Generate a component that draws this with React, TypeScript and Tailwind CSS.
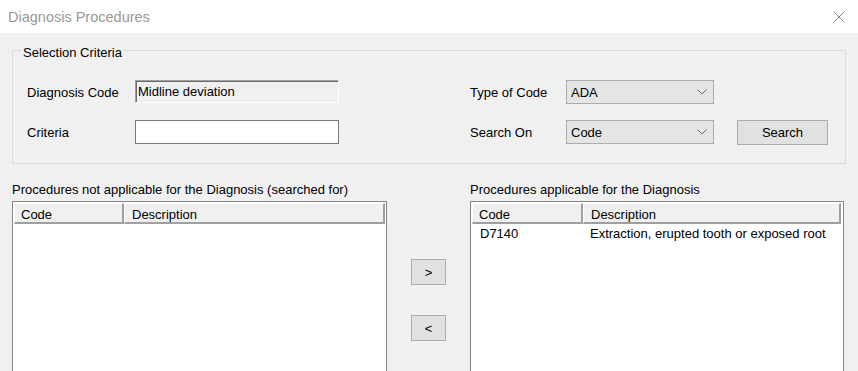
import React from 'react';

const font = { fontFamily: '"Liberation Sans", Arial, sans-serif' };

function Chevron() {
  return (
    <svg width="10" height="6" viewBox="0 0 10 6" className="shrink-0">
      <polyline points="0.5,0.5 5,5 9.5,0.5" fill="none" stroke="#6b6b6b" strokeWidth="1" />
    </svg>
  );
}

function Combo({ value }: { value: string }) {
  return (
    <div className="flex h-[24px] w-[148px] items-center justify-between border border-[#acacac] bg-[#e5e5e5] pl-[4px] pr-[6px]">
      <span>{value}</span>
      <Chevron />
    </div>
  );
}

function Header({ codeW, descW }: { codeW: string; descW: string }) {
  return (
    <div className="flex h-[21px]">
      <div className={`${codeW} flex items-center border-t border-l border-white border-r-2 border-b-2 border-r-[#a0a0a0] border-b-[#a0a0a0] bg-[#f0f0f0] pt-[2px] pl-[6px]`}>
        Code
      </div>
      <div className={`${descW} flex items-center border-t border-l border-white border-r-2 border-b-2 border-r-[#a0a0a0] border-b-[#a0a0a0] bg-[#f0f0f0] pt-[2px] pl-[7px]`}>
        Description
      </div>
    </div>
  );
}

export default function App() {
  return (
    <div style={font} className="flex h-[371px] w-[858px] flex-col overflow-hidden text-[13px] leading-[15px] text-black">
      {/* title bar */}
      <div className="flex h-[33px] shrink-0 items-center justify-between bg-white pl-[8px] pr-[13px]">
        <span className="text-[14.5px] leading-[18px] text-[#999999]">Diagnosis Procedures</span>
        <svg width="12" height="12" viewBox="0 0 12 12">
          <path d="M0.5 0.5 L11.5 11.5 M11.5 0.5 L0.5 11.5" stroke="#8a8a8a" strokeWidth="1" fill="none" />
        </svg>
      </div>

      <div className="flex-1 bg-[#f0f0f0]">
        <fieldset className="mx-[12px] mt-[7px] border border-[#dcdcdc] p-0">
          <legend className="ml-[8px] px-[2px] pt-[5px] leading-[15px]">Selection Criteria</legend>
          <div className="flex flex-col gap-[16px] pt-[20px] pb-[19px] pl-[14px]">
            <div className="flex h-[24px] items-center">
              <span className="w-[108px]">Diagnosis Code</span>
              <div className="h-[23px] w-[204px] self-start border border-[#a0a0a0] border-r-white border-b-white bg-[#f0f0f0] pt-[3px] pl-[2px] shadow-[inset_1px_1px_0_#6d6d6d]">
                Midline deviation
              </div>
              <div className="w-[131px]" />
              <span className="w-[96px]">Type of Code</span>
              <Combo value="ADA" />
            </div>
            <div className="flex h-[24px] items-center">
              <span className="w-[108px]">Criteria</span>
              <div className="h-[24px] w-[204px] border border-[#7a7a7a] bg-white" />
              <div className="w-[131px]" />
              <span className="w-[96px]">Search On</span>
              <Combo value="Code" />
              <button
                type="button"
                className="ml-[23px] h-[25px] w-[91px] border border-[#adadad] bg-[#e1e1e1] text-center"
              >
                Search
              </button>
            </div>
          </div>
        </fieldset>

        <div className="mt-[18px] flex px-[12px]">
          <div className="flex w-[375px] flex-col">
            <span>Procedures not applicable for the Diagnosis (searched for)</span>
            <div className="mt-[4px] h-[200px] border border-[#828790] bg-white p-[1px]">
              <Header codeW="w-[110px]" descW="w-[261px]" />
            </div>
          </div>

          <div className="flex w-[83px] flex-col items-start gap-[30px] pt-[77px] pl-[24px]">
            <button type="button" className="h-[26px] w-[35px] border border-[#adadad] bg-[#e1e1e1]">
              &gt;
            </button>
            <button type="button" className="h-[26px] w-[35px] border border-[#adadad] bg-[#e1e1e1]">
              &lt;
            </button>
          </div>

          <div className="flex w-[374px] flex-col">
            <span>Procedures applicable for the Diagnosis</span>
            <div className="mt-[4px] h-[200px] border border-[#828790] bg-white p-[1px]">
              <Header codeW="w-[111px]" descW="w-[258px]" />
              <div className="flex h-[17px] items-center pt-[2px]">
                <span className="w-[110px] pl-[8px]">D7140</span>
                <span className="pl-[8px]">Extraction, erupted tooth or exposed root</span>
              </div>
            </div>
          </div>
        </div>
      </div>
    </div>
  );
}
